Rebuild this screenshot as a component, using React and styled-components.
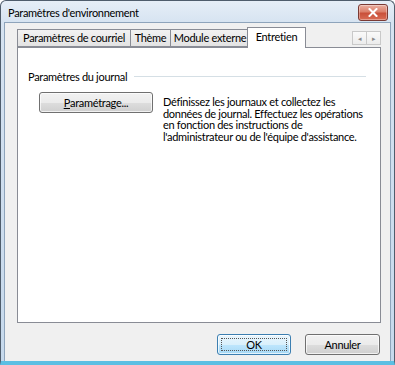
import React from 'react'
import styled, { createGlobalStyle } from 'styled-components'

const Global = createGlobalStyle`
  html, body { margin: 0; padding: 0; background: #ffffff; }
  body {
    font-family: Lato, "Noto Sans", sans-serif;
    font-size: 11px;
    letter-spacing: -0.3px;
    color: #000;
  }
`

const tabs = [
  { label: 'Paramètres de courriel', width: 114 },
  { label: 'Thème', width: 41 },
  { label: 'Module externe', width: 80 },
  { label: 'Entretien', width: 55, active: true },
]

function App() {
  return (
    <>
      <Global />
      <Window>
        <TitleBar>
          <Title>Paramètres d'environnement</Title>
          <CloseButton>
            <svg width="10" height="9" viewBox="0 0 10 9">
              <path d="M1.5 1 L8.5 8 M8.5 1 L1.5 8" stroke="#fff" strokeWidth="2" strokeLinecap="square" />
            </svg>
          </CloseButton>
        </TitleBar>
        <Body>
          <TabStrip>
            {tabs.map(t => (
              <Tab key={t.label} w={t.width} active={t.active}>{t.label}</Tab>
            ))}
            <Arrows>
              <Arrow>◂</Arrow>
              <Arrow>▸</Arrow>
            </Arrows>
          </TabStrip>
          <Panel>
            <GroupHeader>
              <span>Paramètres du journal</span>
              <Rule />
            </GroupHeader>
            <Row>
              <Button w={114}><u>P</u>aramétrage...</Button>
              <Desc>
                Définissez les journaux et collectez les données de journal. Effectuez les opérations
                en fonction des instructions de l'administrateur ou de l'équipe d'assistance.
              </Desc>
            </Row>
          </Panel>
          <Footer>
            <Button w={74} primary><Focus>OK</Focus></Button>
            <Button w={75}>Annuler</Button>
          </Footer>
        </Body>
      </Window>
    </>
  )
}

export default App

const Window = styled.div`
  width: 395px;
  height: 365px;
  box-sizing: border-box;
  display: flex;
  flex-direction: column;
  border: 1px solid #4f5d6c;
  border-radius: 6px 6px 0 0;
  background: linear-gradient(to bottom, #e6eef7 0px, #d6e3f1 22px, #c6d9ec 100%);
  padding: 0 3px 0 3px;
  border-bottom: 4px solid #5cbfe3;
`

const TitleBar = styled.div`
  height: 21px;
  display: flex;
  align-items: center;
  justify-content: space-between;
  padding: 0 3px 0 4px;
`

const Title = styled.div`
  color: #000;
  margin-top: 2px;
`

const CloseButton = styled.div`
  width: 28px;
  height: 15px;
  margin-top: 2px;
  border: 1px solid #7a3a34;
  border-radius: 3px;
  background: linear-gradient(to bottom, #eab0a2 0%, #dc806b 45%, #c9503a 55%, #d96d55 100%);
  display: flex;
  align-items: center;
  justify-content: center;
  box-shadow: inset 0 0 0 1px rgba(255,255,255,0.35);
`

const Body = styled.div`
  flex: 1;
  display: flex;
  flex-direction: column;
  background: #f0f0f0;
  padding: 4px 9px 0 12px;
  border: 1px solid #8ea4bb;
  border-bottom: none;
`

const TabStrip = styled.div`
  height: 20px;
  display: flex;
  align-items: flex-end;
`

const Tab = styled.div`
  box-sizing: border-box;
  width: ${p => p.w + (p.active ? 4 : 0)}px;
  height: ${p => (p.active ? 21 : 18)}px;
  margin: ${p => (p.active ? '0 -2px -1px -2px' : '0 -1px 0 0')};
  position: relative;
  z-index: ${p => (p.active ? 2 : 1)};
  display: flex;
  align-items: center;
  justify-content: center;
  padding-bottom: ${p => (p.active ? 3 : 1)}px;
  border: 1px solid #898c95;
  border-bottom: ${p => (p.active ? 'none' : '1px solid #898c95')};
  background: ${p => (p.active ? '#ffffff' : 'linear-gradient(to bottom, #f2f2f2, #e3e3e3)')};
  white-space: nowrap;
`

const Arrows = styled.div`
  margin-left: auto;
  margin-bottom: 2px;
  display: flex;
`

const Arrow = styled.div`
  width: 15px;
  height: 14px;
  box-sizing: border-box;
  border: 1px solid #c9c9c9;
  margin-left: -1px;
  background: linear-gradient(to bottom, #fafafa, #ececec);
  color: #8a8a8a;
  font-size: 7px;
  display: flex;
  align-items: center;
  justify-content: center;
`

const Panel = styled.div`
  height: 276px;
  box-sizing: border-box;
  border: 1px solid #898c95;
  background: #ffffff;
  padding: 22px 14px 0 10px;
`

const GroupHeader = styled.div`
  display: flex;
  align-items: center;
  gap: 7px;
`

const Rule = styled.div`
  flex: 1;
  height: 1px;
  background: #d5dfe5;
`

const Row = styled.div`
  display: flex;
  align-items: flex-start;
  margin-top: 9px;
  padding-left: 11px;
`

const Button = styled.div`
  box-sizing: border-box;
  width: ${p => p.w}px;
  height: 21px;
  flex-shrink: 0;
  border: 1px solid ${p => (p.primary ? '#3c7fb1' : '#707070')};
  border-radius: 3px;
  display: flex;
  align-items: center;
  justify-content: center;
  background: ${p =>
    p.primary
      ? 'linear-gradient(to bottom, #eaf6fd 0%, #d9f0fc 50%, #bee6fd 51%, #a7d9f5 100%)'
      : 'linear-gradient(to bottom, #f2f2f2 0%, #ebebeb 50%, #dddddd 51%, #cfcfcf 100%)'};
  box-shadow: inset 0 0 0 1px rgba(255,255,255,0.7);
`

const Focus = styled.span`
  display: flex;
  align-items: center;
  justify-content: center;
  width: calc(100% - 6px);
  height: calc(100% - 6px);
  border: 1px dotted #555;
  box-sizing: border-box;
`

const Desc = styled.div`
  margin-left: 10px;
  margin-top: 4px;
  width: 212px;
  line-height: 11.5px;
`

const Footer = styled.div`
  display: flex;
  justify-content: flex-end;
  gap: 14px;
  padding: 11px 1px 0 0;
`
